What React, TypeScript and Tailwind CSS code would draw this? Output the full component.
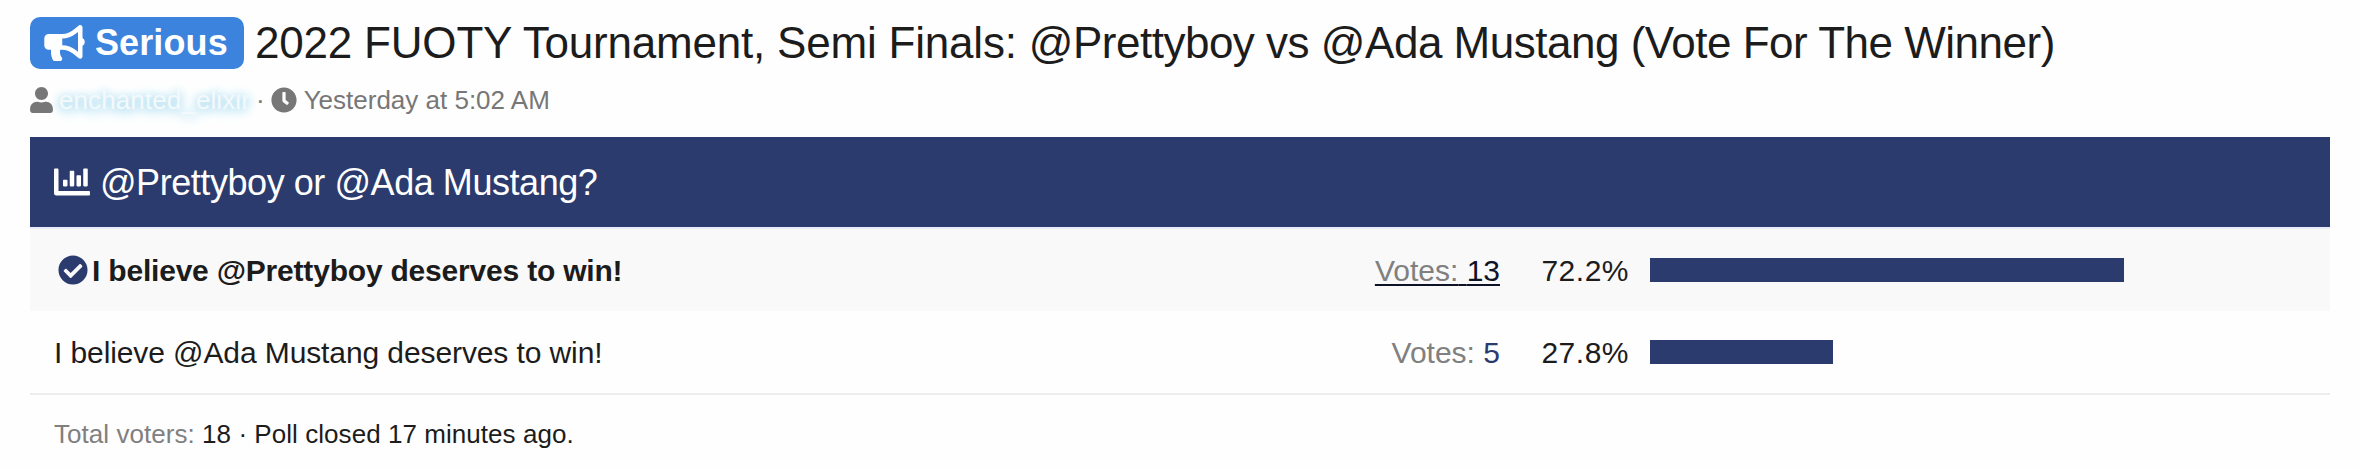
import { FaBullhorn, FaChartBar, FaCheckCircle, FaClock, FaUser } from 'react-icons/fa'
import clsx from 'clsx'

const options = [
  { label: 'I believe @Prettyboy deserves to win!',    votes: 13, percent: 72.2, voted: true  },
  { label: 'I believe @Ada Mustang deserves to win!', votes: 5,  percent: 27.8, voted: false },
]

function ThreadHeader() {
  return (
    <header className="h-[137px] pt-[17px]">
      <h1 className="flex items-center h-[52px] text-[44px] leading-[52px] text-[#1c1c1c] whitespace-nowrap">
        <span className="flex items-center w-[214px] h-[52px] pl-3.5 mr-[11px] rounded-[10px] bg-[#3b83dc] text-white text-[36px] font-bold">
          <FaBullhorn className="w-[41px] h-9 mr-2.5 shrink-0" />
          <span className="tracking-[0.1px]">Serious</span>
        </span>
        <span className="tracking-[-0.2px] whitespace-pre">2022 FUOTY Tournament, Semi Finals: </span>
        <span className="tracking-[-0.49px]">@Prettyboy vs @Ada Mustang (Vote For The Winner)</span>
      </h1>

      <div className="flex items-center h-8 mt-[15px] text-[26px] leading-8 text-[#777] whitespace-nowrap">
        <FaUser className="w-[23px] h-[26px] mr-1.5" />
        <a className="tracking-[0.1px] text-[#f4f9fb] [text-shadow:0_3px_12px_#87ceeb,0_0_10px_#c3e6f4]">enchanted_elixir</a>
        <span className="ml-1.5 mr-1.5">·</span>
        <FaClock className="w-[26px] h-[26px] mr-[7px]" />
        <time>Yesterday at 5:02 AM</time>
      </div>
    </header>
  )
}

function PollRow({ label, votes, percent, voted }: (typeof options)[number]) {
  return (
    <li className={clsx('flex items-center h-[82px] pl-6 pr-[23px] text-[30px] whitespace-nowrap', voted && 'bg-[#f9f9f9]')}>
      <h3 className={clsx('flex items-center flex-1', voted ? 'font-bold tracking-[-0.2px]' : 'tracking-[-0.1px]')}>
        {voted && <FaCheckCircle className="w-[30px] h-[30px] ml-1 mr-1 text-[#2c3b6e]" />}
        <span>{label}</span>
      </h3>
      <a className={clsx('w-[160px] text-right', voted ? 'text-[#0d1226] underline underline-offset-[3px] decoration-2' : 'text-[#2c3b6e]')}>
        <span className="text-[#808080]">Votes:</span> {votes}
      </a>
      <span className="w-[129px] text-right tracking-[0.5px] text-[#1c1c1c]">{percent}%</span>
      <span className="w-[657px] ml-[21px]">
        <span className="block h-6 bg-[#2c3b6e]" style={{ width: `${percent}%` }} />
      </span>
    </li>
  )
}

export default function App() {
  return (
    <main className="h-[469px] px-[30px] bg-[#fefefe] font-['Liberation_Sans',Arial,sans-serif] text-[#1c1c1c]">
      <ThreadHeader />

      <section>
        <h2 className="flex items-center h-[92px] px-6 border-b-2 border-[#e8ebfa] bg-[#2c3b6e] text-white text-[36px] tracking-[-0.44px] whitespace-nowrap">
          <FaChartBar className="w-9 h-9 mr-2.5" />
          <span className="pt-0.5">@Prettyboy or @Ada Mustang?</span>
        </h2>
        <ul>
          {options.map((o) => (
            <PollRow key={o.label} {...o} />
          ))}
        </ul>
        <footer className="flex items-center h-[76px] px-6 pt-[5px] border-t-2 border-[#ededed] text-[26px] tracking-[0.05px] whitespace-pre">
          <span className="text-[#808080]">Total voters: </span>
          <span>18 · Poll closed 17 minutes ago.</span>
        </footer>
      </section>
    </main>
  )
}
